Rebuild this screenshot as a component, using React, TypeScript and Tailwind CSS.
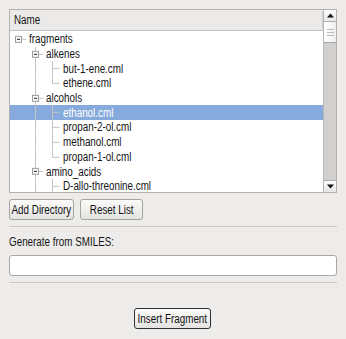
import React from 'react';

type Row = {
  label: string;
  level: number;
  kind: 'dir' | 'leaf';
  last?: boolean;
  selected?: boolean;
};

const ROWS: Row[] = [
  { label: 'fragments', level: 0, kind: 'dir' },
  { label: 'alkenes', level: 1, kind: 'dir' },
  { label: 'but-1-ene.cml', level: 2, kind: 'leaf' },
  { label: 'ethene.cml', level: 2, kind: 'leaf', last: true },
  { label: 'alcohols', level: 1, kind: 'dir' },
  { label: 'ethanol.cml', level: 2, kind: 'leaf', selected: true },
  { label: 'propan-2-ol.cml', level: 2, kind: 'leaf' },
  { label: 'methanol.cml', level: 2, kind: 'leaf' },
  { label: 'propan-1-ol.cml', level: 2, kind: 'leaf', last: true },
  { label: 'amino_acids', level: 1, kind: 'dir' },
  { label: 'D-allo-threonine.cml', level: 2, kind: 'leaf' },
];

const ROW_H = 14.7;
const LINE = '#c4c4c4';

// the screenshot uses a narrow sans; squeeze Liberation Sans to match
function Txt({ children, center }: { children: React.ReactNode; center?: boolean }) {
  return (
    <span
      className={`inline-block whitespace-nowrap leading-none scale-x-[0.82] ${
        center ? 'origin-center' : 'origin-left'
      }`}
    >
      {children}
    </span>
  );
}

function Branch({ row }: { row: Row }) {
  const w = 19 + row.level * 17;
  const mid = ROW_H / 2;
  const cx = 8.5 + row.level * 17;
  return (
    <svg width={w} height={ROW_H} className="shrink-0 block">
      {/* level-1 sibling line, runs through everything below fragments */}
      {row.level >= 1 && (
        <line x1={25.5} y1={0} x2={25.5} y2={ROW_H} stroke={LINE} strokeWidth={1} />
      )}
      {row.kind === 'dir' ? (
        <g>
          <line x1={cx + 3} y1={mid} x2={cx + 8} y2={mid} stroke={LINE} />
          <rect x={cx - 3} y={mid - 3} width={6} height={6} fill="#fafafa" stroke="#9c9c9c" strokeWidth={1} />
          <line x1={cx - 1.5} y1={mid} x2={cx + 1.5} y2={mid} stroke="#222" strokeWidth={1} />
        </g>
      ) : (
        <g>
          <line x1={cx} y1={0} x2={cx} y2={row.last ? mid : ROW_H} stroke={LINE} />
          <line x1={cx} y1={mid} x2={cx + 7} y2={mid} stroke={LINE} />
        </g>
      )}
    </svg>
  );
}

function Arrow({ up }: { up?: boolean }) {
  return (
    <svg width="7" height="5" viewBox="0 0 7 5">
      {up ? <path d="M3.5 0.5 L7 4.5 L0 4.5 Z" fill="#111" /> : <path d="M0 0.5 L7 0.5 L3.5 4.5 Z" fill="#111" />}
    </svg>
  );
}

function Button({ children, def, w }: { children: React.ReactNode; def?: boolean; w: string }) {
  return (
    <button
      className={`${w} h-[21px] rounded-[3px] border bg-gradient-to-b from-[#fbfbfa] to-[#e4e3e1] text-[#111] flex items-center justify-center overflow-hidden ${
        def ? 'border-[#2f2f2f]' : 'border-[#a5a4a2]'
      }`}
    >
      <Txt center>{children}</Txt>
    </button>
  );
}

export default function App() {
  return (
    <div
      className="w-[346px] h-[339px] bg-[#edeceb] px-[9px] pt-[9px] text-[12px] text-[#151515] flex flex-col"
      style={{ fontFamily: '"Liberation Sans", Arial, sans-serif' }}
    >
      {/* tree view */}
      <div className="h-[184px] border border-[#b3b2b0] bg-white flex">
        <div className="flex-1 flex flex-col min-w-0">
          <div className="h-[21px] shrink-0 bg-[#ebeae8] border-b border-[#c3c2c0] flex items-center pl-[4px] relative">
            <Txt>Name</Txt>
            <div className="absolute right-0 top-[2px] bottom-[2px] w-px bg-[#cfcecc]" />
          </div>
          <div className="flex-1 overflow-hidden pt-px">
            {ROWS.map((r, i) => (
              <div
                key={i}
                className={`flex items-center ${r.selected ? 'bg-[#86aadb] text-white' : ''}`}
                style={{ height: ROW_H }}
              >
                <Branch row={r} />
                <Txt>{r.label}</Txt>
              </div>
            ))}
          </div>
        </div>

        {/* scrollbar */}
        <div className="w-[13px] shrink-0 bg-[#d1d0ce] border-l border-[#b8b7b5] flex flex-col">
          <div className="h-[12px] bg-gradient-to-b from-[#fcfcfc] to-[#e8e7e5] border-b border-[#b0afad] flex items-center justify-center">
            <Arrow up />
          </div>
          <div className="h-[21px] bg-gradient-to-r from-[#ffffff] to-[#eeeeec] border-b border-[#a9a8a6] flex flex-col items-center justify-center gap-[2px]">
            <div className="w-[7px] h-px bg-[#bdbcba]" />
            <div className="w-[7px] h-px bg-[#bdbcba]" />
            <div className="w-[7px] h-px bg-[#bdbcba]" />
          </div>
          <div className="flex-1" />
          <div className="h-[12px] bg-gradient-to-b from-[#fcfcfc] to-[#e8e7e5] border-t border-[#b0afad] flex items-center justify-center">
            <Arrow />
          </div>
        </div>
      </div>

      <div className="flex gap-[6px] mt-[6px]">
        <Button w="w-[65px]">Add Directory</Button>
        <Button w="w-[63px]">Reset List</Button>
      </div>

      <div className="h-px bg-[#cbcac8] mt-[6px]" />

      <div className="mt-[7px] h-[15px] flex items-center">
        <Txt>Generate from SMILES:</Txt>
      </div>

      <input className="mt-[6px] h-[21px] rounded-[3px] border border-[#a9a8a6] bg-white outline-none px-1" />

      <div className="h-px bg-[#cbcac8] mt-[6px]" />

      <div className="flex justify-center mt-[25px] pr-[1px]">
        <Button def w="w-[77px]">Insert Fragment</Button>
      </div>
    </div>
  );
}
